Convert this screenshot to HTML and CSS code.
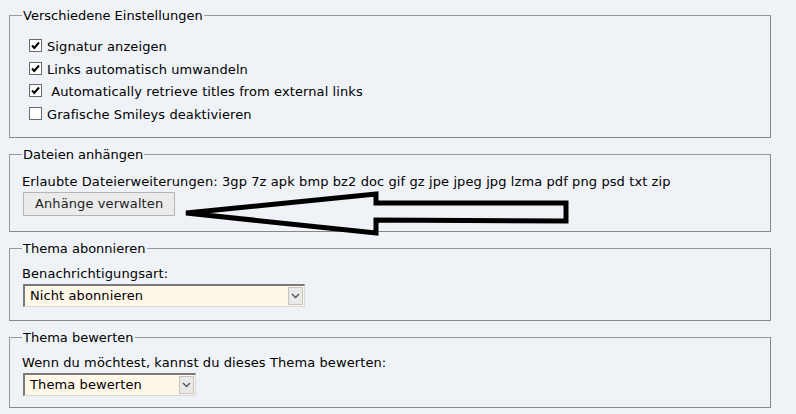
FILE: index.html
```html
<!DOCTYPE html>
<html lang="de">
<head>
    <meta charset="UTF-8">
    <title>Optionen</title>
    <link rel="stylesheet" href="styles.css">
</head>
<body>
    <div class="page">
        <fieldset class="box">
            <legend>Verschiedene Einstellungen</legend>
            <ul class="checklist">
                <li><span class="check on"><svg width="11" height="11" viewBox="0 0 11 11"><path d="M2 5.5 L4.3 8 L9 2.5" fill="none" stroke="#000" stroke-width="2"/></svg></span>Signatur anzeigen</li>
                <li><span class="check on"><svg width="11" height="11" viewBox="0 0 11 11"><path d="M2 5.5 L4.3 8 L9 2.5" fill="none" stroke="#000" stroke-width="2"/></svg></span>Links automatisch umwandeln</li>
                <li><span class="check on"><svg width="11" height="11" viewBox="0 0 11 11"><path d="M2 5.5 L4.3 8 L9 2.5" fill="none" stroke="#000" stroke-width="2"/></svg></span>&nbsp;Automatically retrieve titles from external links</li>
                <li><span class="check"></span>Grafische Smileys deaktivieren</li>
            </ul>
        </fieldset>

        <fieldset class="box files">
            <legend>Dateien anhängen</legend>
            <div class="row">Erlaubte Dateierweiterungen: 3gp 7z apk bmp bz2 doc gif gz jpe jpeg jpg lzma pdf png psd txt zip</div>
            <div class="attach">
                <button class="btn">Anhänge verwalten</button>
                <!-- hand drawn arrow pointing at the button -->
                <svg class="arrow" width="400" height="48" viewBox="0 0 400 48">
                    <path d="M3 22 L193 3 L193 12 L383 12 L383 30 L193 29 L193 42 Z" fill="none" stroke="#000" stroke-width="5" stroke-linejoin="miter"/>
                </svg>
            </div>
        </fieldset>

        <fieldset class="box">
            <legend>Thema abonnieren</legend>
            <div class="row short">Benachrichtigungsart:</div>
            <div class="select wide">
                <span>Nicht abonnieren</span>
                <span class="drop"><svg width="9" height="6" viewBox="0 0 9 6"><path d="M1 1 L4.5 4.5 L8 1" fill="none" stroke="#555" stroke-width="1.4"/></svg></span>
            </div>
        </fieldset>

        <fieldset class="box last">
            <legend>Thema bewerten</legend>
            <div class="row short">Wenn du möchtest, kannst du dieses Thema bewerten:</div>
            <div class="select narrow">
                <span>Thema bewerten</span>
                <span class="drop"><svg width="9" height="6" viewBox="0 0 9 6"><path d="M1 1 L4.5 4.5 L8 1" fill="none" stroke="#555" stroke-width="1.4"/></svg></span>
            </div>
        </fieldset>
    </div>
</body>
</html>
```

FILE: styles.css
```css
body {
    margin: 0;
    background-color: #eff3f7;
    font-family: Verdana, "DejaVu Sans", sans-serif;
    font-size: 13px;
    letter-spacing: 0.1px;
    color: #000;
}
.page {
    width: 762px;
    padding: 8px 0 0 9px;
}
.box {
    margin: 0 0 9px 0;
    padding: 4px 12px 6px 12px;
    border: 1px solid #888;
    border-left-color: #999;
    border-top-color: #999;
}
.box.last {
    padding-bottom: 4px;
}
.box legend {
    padding: 0 1px;
    letter-spacing: 0;
}
.checklist {
    list-style: none;
    margin: 8px 0 5px 0;
    padding: 0 0 0 7px;
}
.checklist li {
    height: 22.7px;
    display: flex;
    align-items: center;
}
.check {
    width: 13px;
    height: 13px;
    box-sizing: border-box;
    border: 1px solid #6a6a6a;
    background: #fff;
    margin: 0 5px 2px 0;
    display: flex;
    align-items: center;
    justify-content: center;
}
.check svg {
    display: block;
}
.row {
    line-height: 18px;
    margin-top: 7px;
}
.row.short {
    margin-top: 5px;
}
.files {
    padding-bottom: 15px;
}
.attach {
    display: flex;
    align-items: flex-start;
    margin-top: 1px;
}
.btn {
    font-family: inherit;
    font-size: 13px;
    letter-spacing: 0.1px;
    color: #222;
    background: #ebebeb;
    border: 1px solid #b5b5b5;
    padding: 3px 11px 4px 11px;
    margin: 0 0 0 1px;
    height: 24px;
}
.arrow {
    margin: -1px 0 -24px 8px;
}
.select {
    display: flex;
    justify-content: space-between;
    align-items: center;
    height: 23px;
    margin: 1px 0 7px 1px;
    background: #fff7e8;
    border-top: 2px solid #7a7a7a;
    border-left: 2px solid #7a7a7a;
    border-right: 1px solid #d8d8d8;
    border-bottom: 1px solid #d8d8d8;
    box-sizing: border-box;
    padding-left: 5px;
}
.select.wide {
    width: 282px;
}
.select.narrow {
    width: 173px;
}
.drop {
    width: 15px;
    height: 18px;
    margin-right: 1px;
    background: #e9e9e9;
    border: 1px solid #c4c4c4;
    display: flex;
    align-items: center;
    justify-content: center;
    box-sizing: border-box;
}
```
